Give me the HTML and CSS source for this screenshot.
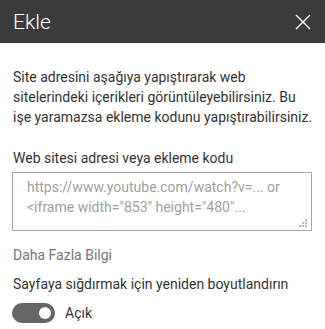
FILE: index.html
```html
<!DOCTYPE html>
<html lang="tr">

<head>
    <meta charset="UTF-8">
    <meta name="viewport" content="width=device-width, initial-scale=1.0">
    <title>Ekle</title>
    <link rel="stylesheet" href="styles.css">
</head>

<body>
    <header class="panel-header">
        <h1>Ekle</h1>
        <button class="close-btn" aria-label="Kapat">
            <svg width="16" height="16" viewBox="0 0 16 16">
                <path d="M1 1 L15 15 M15 1 L1 15" stroke="#fff" stroke-width="1.4" fill="none" />
            </svg>
        </button>
    </header>

    <div class="panel-body">
        <p class="intro">Site adresini aşağıya yapıştırarak web sitelerindeki içerikleri görüntüleyebilirsiniz. Bu<br>işe yaramazsa ekleme kodunu yapıştırabilirsiniz.</p>

        <label class="field-label" for="embed">Web sitesi adresi veya ekleme kodu</label>
        <div class="embed-wrap">
            <textarea id="embed" class="embed-box" placeholder="https://www.youtube.com/watch?v=... or &lt;iframe width=&quot;853&quot; height=&quot;480&quot;..."></textarea>
            <!-- resize grip -->
            <svg class="grip" width="9" height="9" viewBox="0 0 9 9">
                <rect x="6" y="0" width="2" height="2" fill="#bbb" />
                <rect x="3" y="3" width="2" height="2" fill="#bbb" />
                <rect x="6" y="3" width="2" height="2" fill="#bbb" />
                <rect x="0" y="6" width="2" height="2" fill="#bbb" />
                <rect x="3" y="6" width="2" height="2" fill="#bbb" />
                <rect x="6" y="6" width="2" height="2" fill="#bbb" />
            </svg>
        </div>

        <a class="more-link" href="#">Daha Fazla Bilgi</a>

        <div class="toggle-label">Sayfaya sığdırmak için yeniden boyutlandırın</div>
        <div class="toggle-row">
            <span class="toggle"><span class="knob"></span></span>
            <span>Açık</span>
        </div>
    </div>
</body>

</html>
```

FILE: styles.css
```css
body {
    margin: 0;
    font-family: Roboto, "Open Sans", sans-serif;
    font-size: 14px;
    color: #333;
    background: #fff;
}

.panel-header {
    height: 43px;
    background: #3b3b3b;
    display: flex;
    align-items: center;
    justify-content: space-between;
    padding: 0 14px 0 13px;
}

.panel-header h1 {
    margin: 0;
    font-size: 21px;
    font-weight: 300;
    color: #fff;
}

.close-btn {
    background: none;
    border: none;
    padding: 0;
    width: 16px;
    height: 16px;
    display: flex;
}

.panel-body {
    padding: 0 13px;
}

.intro {
    margin: 24px -8px 21px 0;
    line-height: 20px;
}

.field-label {
    display: block;
    line-height: 20px;
    margin-bottom: 4px;
}

.embed-wrap {
    position: relative;
    width: 300px;
    margin-left: -1px;
}

.embed-box {
    display: block;
    box-sizing: border-box;
    width: 300px;
    height: 59px;
    padding: 4px 14px;
    border: 1px solid #a6a6a6;
    font-family: inherit;
    font-size: 14px;
    line-height: 20px;
    color: #333;
    resize: none;
}

.embed-box::placeholder {
    color: #a0a0a0;
}

.grip {
    position: absolute;
    right: 4px;
    bottom: 3px;
}

.more-link {
    display: block;
    margin-top: 14px;
    line-height: 20px;
    color: #767676;
    text-decoration: none;
}

.toggle-label {
    margin-top: 9px;
    line-height: 20px;
}

.toggle-row {
    display: flex;
    align-items: center;
    gap: 10px;
    margin-top: 9px;
}

.toggle {
    box-sizing: border-box;
    width: 43px;
    height: 20px;
    margin-left: -1px;
    border-radius: 10px;
    background: #666;
    display: flex;
    align-items: center;
    justify-content: flex-end;
    padding-right: 4px;
}

.knob {
    width: 12px;
    height: 12px;
    border-radius: 50%;
    background: #fff;
}
```
